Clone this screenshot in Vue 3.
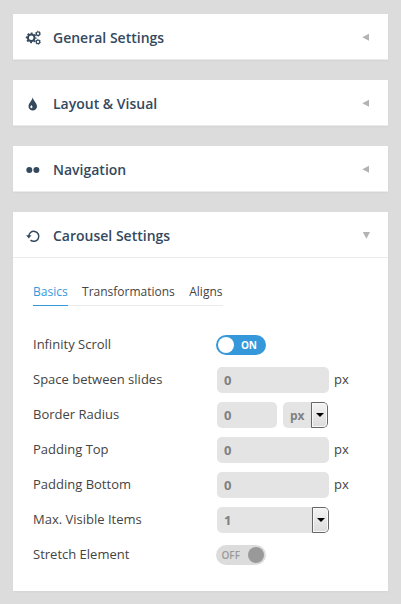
<script setup>
import { ref } from 'vue'

const sections = [
  { title: 'General Settings', icon: 'cogs' },
  { title: 'Layout & Visual', icon: 'drop' },
  { title: 'Navigation', icon: 'dots' },
  { title: 'Carousel Settings', icon: 'undo', open: true },
]
const tabs = ['Basics', 'Transformations', 'Aligns']
const activeTab = ref('Basics')
const rows = ref([
  { label: 'Infinity Scroll', type: 'toggle', value: true },
  { label: 'Space between slides', type: 'text', value: '0', unit: 'px' },
  { label: 'Border Radius', type: 'measure', value: '0', unit: 'px' },
  { label: 'Padding Top', type: 'text', value: '0', unit: 'px' },
  { label: 'Padding Bottom', type: 'text', value: '0', unit: 'px' },
  { label: 'Max. Visible Items', type: 'select', value: '1' },
  { label: 'Stretch Element', type: 'toggle', value: false },
])
</script>

<template>
  <main class="page">
    <section v-for="s in sections" :key="s.title" class="card" :class="{ open: s.open }">
      <header class="head">
        <svg class="icon" viewBox="0 0 16 16" width="16" height="16">
          <g v-if="s.icon === 'cogs'" fill="none" stroke="#34495e">
            <circle cx="6.2" cy="7.8" r="3.3" stroke-width="2" />
            <circle cx="6.2" cy="7.8" r="4.6" stroke-width="1.6" stroke-dasharray="1.9 1.71" stroke-dashoffset=".95" />
            <circle cx="13" cy="3.7" r="1.8" stroke-width="1.3" />
            <circle cx="13" cy="3.7" r="2.6" stroke-width=".6" stroke-dasharray="1.3 1.42" />
            <circle cx="13" cy="11.9" r="1.8" stroke-width="1.3" />
            <circle cx="13" cy="11.9" r="2.6" stroke-width=".6" stroke-dasharray="1.3 1.42" />
          </g>
          <g v-else-if="s.icon === 'drop'">
            <path fill="#34495e" d="M7.7 1.2C8.3 4.7 12 7.2 12 10.3A4.25 4.25 0 0 1 3.5 10.3C3.5 7.2 7.1 4.7 7.7 1.2Z" />
            <path fill="#fff" d="M6.4 9C6.1 9.8 5.3 10.2 5.3 11.1A1.1 1.1 0 0 0 7.5 11.1C7.5 10.2 6.7 9.8 6.4 9Z" />
          </g>
          <g v-else-if="s.icon === 'dots'" fill="#34495e">
            <circle cx="4.3" cy="7.9" r="3" />
            <circle cx="11.4" cy="7.9" r="3" />
          </g>
          <g v-else>
            <path fill="none" stroke="#34495e" stroke-width="1.5" d="M3.8 8.6A5 5 0 1 1 5.5 12.1" />
            <path fill="#34495e" d="M1.1 7.2H6.5L3.8 10.4Z" />
          </g>
        </svg>
        <h2>{{ s.title }}</h2>
        <svg class="caret" viewBox="0 0 8 8" width="8" height="8">
          <path fill="#b3b3b3" :d="s.open ? 'M0.8 0.9H8L4.4 7.7Z' : 'M7 0.7V7.7L0.3 4.2Z'" />
        </svg>
      </header>

      <div v-if="s.open" class="body">
        <nav class="tabs">
          <a v-for="t in tabs" :key="t" :class="{ active: t === activeTab }" @click="activeTab = t">{{ t }}</a>
        </nav>
        <div v-for="r in rows" :key="r.label" class="row">
          <span class="label">{{ r.label }}</span>
          <button v-if="r.type === 'toggle'" class="toggle" :class="{ on: r.value }" @click="r.value = !r.value">
            <span class="state">{{ r.value ? 'ON' : 'OFF' }}</span>
            <span class="knob"></span>
          </button>
          <template v-else-if="r.type === 'text'">
            <input v-model="r.value" class="field" type="text" />
            <span class="unit">{{ r.unit }}</span>
          </template>
          <template v-else>
            <input v-if="r.type === 'measure'" v-model="r.value" class="field short" type="text" />
            <div class="select" :class="{ small: r.type === 'measure' }">
              <span class="value">{{ r.type === 'measure' ? r.unit : r.value }}</span>
              <i class="drop">
                <svg viewBox="0 0 8 4" width="8" height="4"><path d="M0 0H8L4 4Z" /></svg>
              </i>
            </div>
          </template>
        </div>
      </div>
    </section>
  </main>
</template>

<style>
body {
  background: #dcdcdc;
}
</style>

<style scoped>
.page {
  box-sizing: border-box;
  height: 604px;
  padding: 14px 13px 13px;
  display: flex;
  flex-direction: column;
  gap: 20px;
  overflow: hidden;
  background: #dcdcdc;
  font-family: "Open Sans", sans-serif;
  font-size: 13px;
  color: #444;
}
.card {
  box-sizing: border-box;
  flex: none;
  height: 46px;
  background: #fff;
  box-shadow: 0 1px 2px rgba(0, 0, 0, 0.04);
}
.card.open {
  height: 379px;
}
.head {
  box-sizing: border-box;
  height: 46px;
  padding: 0 18px 0 12px;
  display: flex;
  align-items: center;
  border-bottom: 1px solid #ebebeb;
}
.icon {
  margin-top: 3px;
}
h2 {
  flex: 1;
  margin: 2px 0 0 12px;
  font-size: 14px;
  font-weight: 600;
  line-height: 20px;
  color: #34495e;
}
.caret {
  margin-top: 1px;
}
.body {
  padding: 25px 20px 0;
}
.tabs {
  width: 190px;
  height: 22px;
  margin-bottom: 21px;
  display: flex;
  gap: 14.4px;
  border-bottom: 1px solid #ebebeb;
  font-size: 12px;
  line-height: 18px;
  white-space: nowrap;
}
.tabs a {
  height: 22px;
  border-bottom: 1px solid transparent;
}
.tabs .active {
  color: #3498db;
  border-color: #3498db;
}
.row {
  height: 35px;
  display: flex;
  align-items: center;
}
.label {
  width: 184px;
  padding-bottom: 2px;
  line-height: 18px;
}
.field,
.select {
  box-sizing: border-box;
  width: 112px;
  height: 26px;
  margin: 0;
  padding: 1px 7px 0;
  border: 0;
  border-radius: 5px;
  background: #e4e4e4;
  color: #808080;
  font: bold 13px "Open Sans", sans-serif;
  outline: 0;
}
.field.short {
  width: 60px;
}
.unit {
  margin-left: 5px;
  padding-bottom: 2px;
  line-height: 18px;
}
.select {
  padding: 0 0 0 7px;
  display: flex;
  align-items: center;
  justify-content: space-between;
  overflow: hidden;
}
.select.small {
  width: 45px;
  margin-left: 6px;
  font-size: 12px;
}
.small .value {
  padding-top: 2px;
}
.drop {
  box-sizing: border-box;
  width: 17px;
  height: 26px;
  display: flex;
  align-items: center;
  justify-content: center;
  border: 1px solid #666;
  border-radius: 0 4px 4px 0;
  background: linear-gradient(#f3f3f3, #dcdcdc);
  box-shadow: inset 0 0 0 1px #f8f8f8;
}
.toggle {
  box-sizing: border-box;
  width: 50px;
  height: 20px;
  margin: 1px 0 0 -1px;
  padding: 2px;
  display: flex;
  align-items: center;
  justify-content: space-between;
  border: 0;
  border-radius: 10px;
  background: #dcdcdc;
  color: #999;
  font: 600 10px "Open Sans", sans-serif;
}
.toggle .state {
  margin-left: 3.5px;
}
.toggle .knob {
  width: 16px;
  height: 16px;
  border-radius: 50%;
  background: #999;
}
.toggle.on {
  flex-direction: row-reverse;
  background: #3498db;
  color: #fff;
}
.toggle.on .state {
  margin: 0 7px 0 0;
  font-weight: 700;
}
.toggle.on .knob {
  background: #fff;
}
</style>
